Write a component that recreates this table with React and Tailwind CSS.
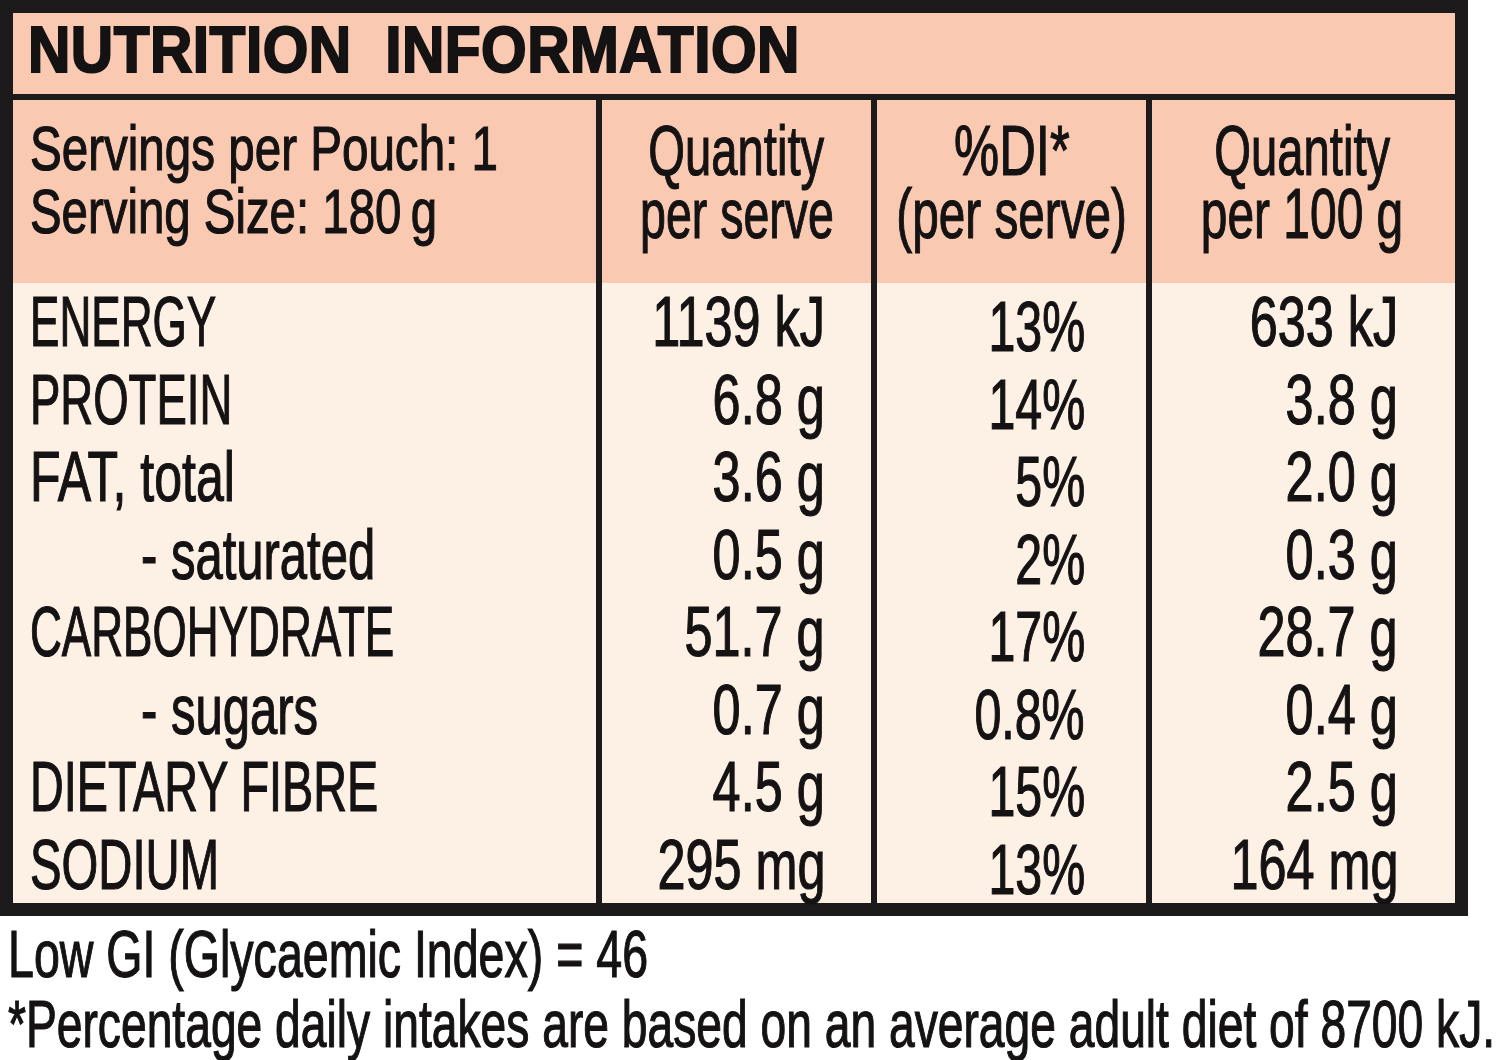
const rows = [
  { label: 'ENERGY', ls: 'scale-x-[0.63]', sub: false, q: '1139 kJ', di: '13%', h: '633 kJ' },
  { label: 'PROTEIN', ls: 'scale-x-[0.65]', sub: false, q: '6.8 g', di: '14%', h: '3.8 g' },
  { label: 'FAT, total', ls: 'scale-x-[0.715]', sub: false, q: '3.6 g', di: '5%', h: '2.0 g' },
  { label: '- saturated', ls: 'scale-x-[0.7]', sub: true, q: '0.5 g', di: '2%', h: '0.3 g' },
  { label: 'CARBOHYDRATE', ls: 'scale-x-[0.63]', sub: false, q: '51.7 g', di: '17%', h: '28.7 g' },
  { label: '- sugars', ls: 'scale-x-[0.7]', sub: true, q: '0.7 g', di: '0.8%', h: '0.4 g' },
  { label: 'DIETARY FIBRE', ls: 'scale-x-[0.668]', sub: false, q: '4.5 g', di: '15%', h: '2.5 g' },
  { label: 'SODIUM', ls: 'scale-x-[0.675]', sub: false, q: '295 mg', di: '13%', h: '164 mg' },
]

const font = "font-['Liberation_Sans',Arial,sans-serif]"

const App = () => {
  return (
    <div className={`w-[1500px] h-[1060px] bg-white text-[#141212] ${font} overflow-hidden [-webkit-text-stroke:1.2px_#141212]`}>

      <div className="w-[1468px] border-[13px] border-[#1c1a1a]">

        {/* title */}
        <div className="h-[81px] bg-[#f9c9b2] border-b-[6px] border-[#1c1a1a] box-content pl-[15px]">
          <span className="inline-block origin-left scale-x-[0.917] whitespace-nowrap text-[64px] leading-[75px] font-bold tracking-[0.5px] [-webkit-text-stroke:2px_#141212]">
            NUTRITION&nbsp; INFORMATION
          </span>
        </div>

        {/* header row */}
        <div className="grid grid-cols-[589px_275px_275px_1fr] h-[183px] bg-[#f9c9b2]">
          <div className="border-r-[6px] border-[#1c1a1a] pl-[17px] pt-[17px] text-[63px] leading-[63px]">
            <div className="flex">
              <span className="inline-block origin-left scale-x-[0.755] whitespace-nowrap">Servings per Pouch: 1</span>
            </div>
            <div className="flex">
              <span className="inline-block origin-left scale-x-[0.752] whitespace-nowrap">Serving Size: 180&thinsp;g</span>
            </div>
          </div>
          <div className="border-r-[6px] border-[#1c1a1a] pt-[19px] text-[71px] leading-[63px]">
            <div className="flex justify-center">
              <span className="inline-block origin-center scale-x-[0.665] whitespace-nowrap">Quantity</span>
            </div>
            <div className="flex justify-center">
              <span className="inline-block origin-center scale-x-[0.655] whitespace-nowrap">per serve</span>
            </div>
          </div>
          <div className="border-r-[6px] border-[#1c1a1a] pt-[19px] text-[71px] leading-[63px]">
            <div className="flex justify-center">
              <span className="inline-block origin-center scale-x-[0.715] whitespace-nowrap">%DI*</span>
            </div>
            <div className="flex justify-center">
              <span className="inline-block origin-center scale-x-[0.672] whitespace-nowrap">(per serve)</span>
            </div>
          </div>
          <div className="pt-[19px] pr-[10px] text-[71px] leading-[63px]">
            <div className="flex justify-center">
              <span className="inline-block origin-center scale-x-[0.665] whitespace-nowrap">Quantity</span>
            </div>
            <div className="flex justify-center">
              <span className="inline-block origin-center scale-x-[0.675] whitespace-nowrap">per 100 g</span>
            </div>
          </div>
        </div>

        {/* body */}
        <div className="grid grid-cols-[589px_275px_275px_1fr] h-[620px] bg-[#fdf0e5] text-[70px] leading-[77.5px]">
          <div className="border-r-[6px] border-[#1c1a1a] pt-[1px]">
            {rows.map((r) => (
              <div key={r.label} className={`flex h-[77.5px] ${r.sub ? 'pl-[128px]' : 'pl-[17px]'}`}>
                <span className={`inline-block origin-left whitespace-nowrap ${r.ls}`}>{r.label}</span>
              </div>
            ))}
          </div>
          <div className="border-r-[6px] border-[#1c1a1a] pt-[1px] pr-[46px]">
            {rows.map((r) => (
              <div key={r.label} className="flex h-[77.5px] justify-end">
                <span className="inline-block origin-right scale-x-[0.72] whitespace-nowrap">{r.q}</span>
              </div>
            ))}
          </div>
          <div className="border-r-[6px] border-[#1c1a1a] pt-[6px] pr-[61px]">
            {rows.map((r) => (
              <div key={r.label} className="flex h-[77.5px] justify-end">
                <span className="inline-block origin-right scale-x-[0.69] whitespace-nowrap">{r.di}</span>
              </div>
            ))}
          </div>
          <div className="pt-[1px] pr-[57px]">
            {rows.map((r) => (
              <div key={r.label} className="flex h-[77.5px] justify-end">
                <span className="inline-block origin-right scale-x-[0.72] whitespace-nowrap">{r.h}</span>
              </div>
            ))}
          </div>
        </div>

      </div>

      {/* footnotes */}
      <div className="pl-[8px] pt-[3px] text-[66px] leading-[70px]">
        <div className="flex">
          <span className="inline-block origin-left scale-x-[0.705] whitespace-nowrap">Low GI (Glycaemic Index) = 46</span>
        </div>
        <div className="flex">
          <span className="inline-block origin-left scale-x-[0.70] whitespace-nowrap">*Percentage daily intakes are based on an average adult diet of 8700 kJ.</span>
        </div>
      </div>

    </div>
  )
}

export default App
